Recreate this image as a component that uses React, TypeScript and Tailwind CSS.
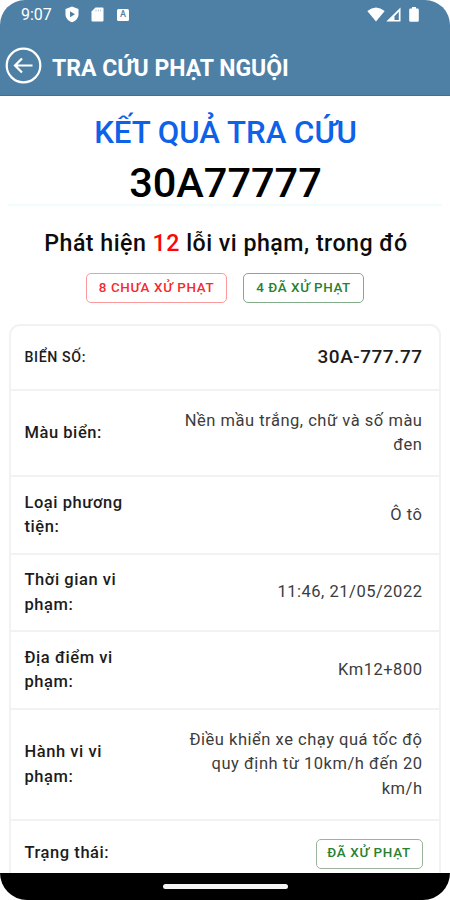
import type { ReactNode } from "react";

function StatusBar() {
  return (
    <div className="flex h-[29px] items-center justify-between pl-[21px] pr-[31px] text-white">
      <div className="flex items-center">
        <span className="w-[44px] text-[16px] leading-none">9:07</span>
        <svg width="14" height="17" viewBox="0 0 14 17">
          <path d="M7 .5 13.500 3v5.200c0 3.800-2.700 6.700-6.500 8.100C3.200 14.900.5 12 .5 8.200V3Z" fill="white" />
          <path d="M5 5.200 10 8.200 5 11.200Z" fill="#4e80a6" />
        </svg>
        <svg className="ml-[12px]" width="13" height="15" viewBox="0 0 13 15">
          <path d="M4.500.5H11.500Q12.500.5 12.500 1.500V13.500Q12.500 14.500 11.500 14.500H1.500Q.5 14.500.5 13.500V4.500Z" fill="white" />
          <path d="M5 2.500v2M7.300 2.500v2M9.600 2.500v2" stroke="#a9c3d7" strokeWidth=".9" />
        </svg>
        <span className="ml-[13px] flex size-[12px] items-center justify-center rounded-[1.5px] bg-white text-[9px] leading-none font-medium text-[#4e80a6]">
          A
        </span>
      </div>
      <div className="flex items-center">
        <svg width="18" height="15" viewBox="0 0 18 15">
          <path d="M9 14.500.3 4Q9-3 17.700 4Z" fill="white" />
        </svg>
        <svg className="ml-[1px]" width="15" height="15" viewBox="0 0 15 15">
          <path d="M14.500.5V14.500H.3Z" fill="white" />
          <path d="M12.800 4.800V13H8.500V9.300Z" fill="#4e80a6" />
        </svg>
        <svg className="ml-[8px]" width="10" height="15" viewBox="0 0 10 15">
          <path d="M3 0H7V1.500H8.500Q9.800 1.500 9.800 2.800V13.500Q9.800 14.800 8.500 14.800H1.500Q.2 14.800.2 13.500V2.800Q.2 1.500 1.500 1.500H3Z" fill="white" />
        </svg>
      </div>
    </div>
  );
}

function Row({ label, height, labelClass, children }: { label: string; height: string; labelClass?: string; children: ReactNode }) {
  return (
    <div className={`flex shrink-0 items-center justify-between border-b-2 border-[#f2f2f2] pr-[16.5px] pl-[13.5px] ${height}`}>
      <div className={`w-[120px] font-medium text-[#1c1c1c] ${labelClass ?? "text-[16.5px] tracking-[0.55px]"}`}>{label}</div>
      <div className="w-[242px] text-right text-[16.5px] tracking-[0.52px] text-[#3c3c3c]">{children}</div>
    </div>
  );
}

export default function App() {
  return (
    <div className="flex h-[900px] w-[450px] flex-col overflow-hidden bg-white font-[Roboto,sans-serif]">
      <header className="h-[96px] shrink-0 rounded-t-[25px] border-b border-[#3b729d] bg-[#4e80a6]">
        <StatusBar />
        <div className="flex h-[73px] items-center pl-[5px] text-white">
          <svg width="37" height="37" viewBox="0 0 37 37" fill="none" stroke="white" strokeWidth="2.200">
            <circle cx="18.500" cy="18.500" r="16.800" />
            <path d="M27.500 18.500H10M17 11.500 10 18.500 17 25.500" />
          </svg>
          <h1 className="mt-[6px] ml-[10px] text-[23px] leading-none font-bold whitespace-nowrap">TRA CỨU PHẠT NGUỘI</h1>
        </div>
      </header>

      <main className="flex min-h-0 flex-1 flex-col overflow-hidden">
        <div className="mx-[8px] flex h-[110px] shrink-0 flex-col items-center border-b-2 border-[#f1fdfc] pt-[14px] pl-px whitespace-nowrap">
          <h2 className="h-[46px] text-[31.2px] leading-[46px] font-medium text-[#0d62e8]">KẾT QUẢ TRA CỨU</h2>
          <p className="h-[48px] text-[41.500px] leading-[54px] font-medium text-black">30A77777</p>
        </div>
        <p className="mt-[21px] h-[32px] shrink-0 pl-[2px] text-center text-[23.2px] leading-[32px] font-medium tracking-[0.48px] whitespace-nowrap text-[#0c0c0c]">
          Phát hiện <span className="text-[#fb0505]">12</span> lỗi vi phạm, trong đó
        </p>
        <div className="mt-[14px] flex h-[30px] shrink-0 justify-center gap-[16px] text-[13.4px] font-medium whitespace-nowrap">
          <div className="flex w-[141px] items-center justify-center rounded-[5px] border border-[#fb9a9d] tracking-[0.65px] text-[#f62a2d]">8 CHƯA XỬ PHẠT</div>
          <div className="flex w-[121px] items-center justify-center rounded-[5px] border border-[#83ac8b] tracking-[0.6px] text-[#288130]">4 ĐÃ XỬ PHẠT</div>
        </div>

        <section className="mx-[9px] mt-[21px] flex shrink-0 flex-col rounded-t-[11px] border-2 border-b-0 border-[#f2f2f2] leading-[24.500px]">
          <Row label="BIỂN SỐ:" height="h-[65px]" labelClass="text-[14.2px] tracking-[0.6px]">
            <span className="text-[19px] font-medium tracking-[0.5px] text-[#1c1c1c]">30A-777.77</span>
          </Row>
          <Row label="Màu biển:" height="h-[86px]">Nền mầu trắng, chữ và số màu đen</Row>
          <Row label="Loại phương tiện:" height="h-[78px]">Ô tô</Row>
          <Row label="Thời gian vi phạm:" height="h-[77px]">11:46, 21/05/2022</Row>
          <Row label="Địa điểm vi phạm:" height="h-[78px]">Km12+800</Row>
          <Row label="Hành vi vi phạm:" height="h-[111px]">Điều khiển xe chạy quá tốc độ quy định từ 10km/h đến 20 km/h</Row>
          <Row label="Trạng thái:" height="h-[67px]">
            <span className="ml-auto flex h-[30px] w-[107px] items-center justify-center rounded-[5px] border border-[#9bb39b] text-[13.4px] font-medium tracking-[0.7px] text-[#288130]">
              ĐÃ XỬ PHẠT
            </span>
          </Row>
        </section>
      </main>

      <footer className="flex h-[27px] shrink-0 items-center justify-center rounded-b-[27px] bg-black">
        <div className="h-[5px] w-[125px] rounded-full bg-[#f4f4f4]" />
      </footer>
    </div>
  );
}
